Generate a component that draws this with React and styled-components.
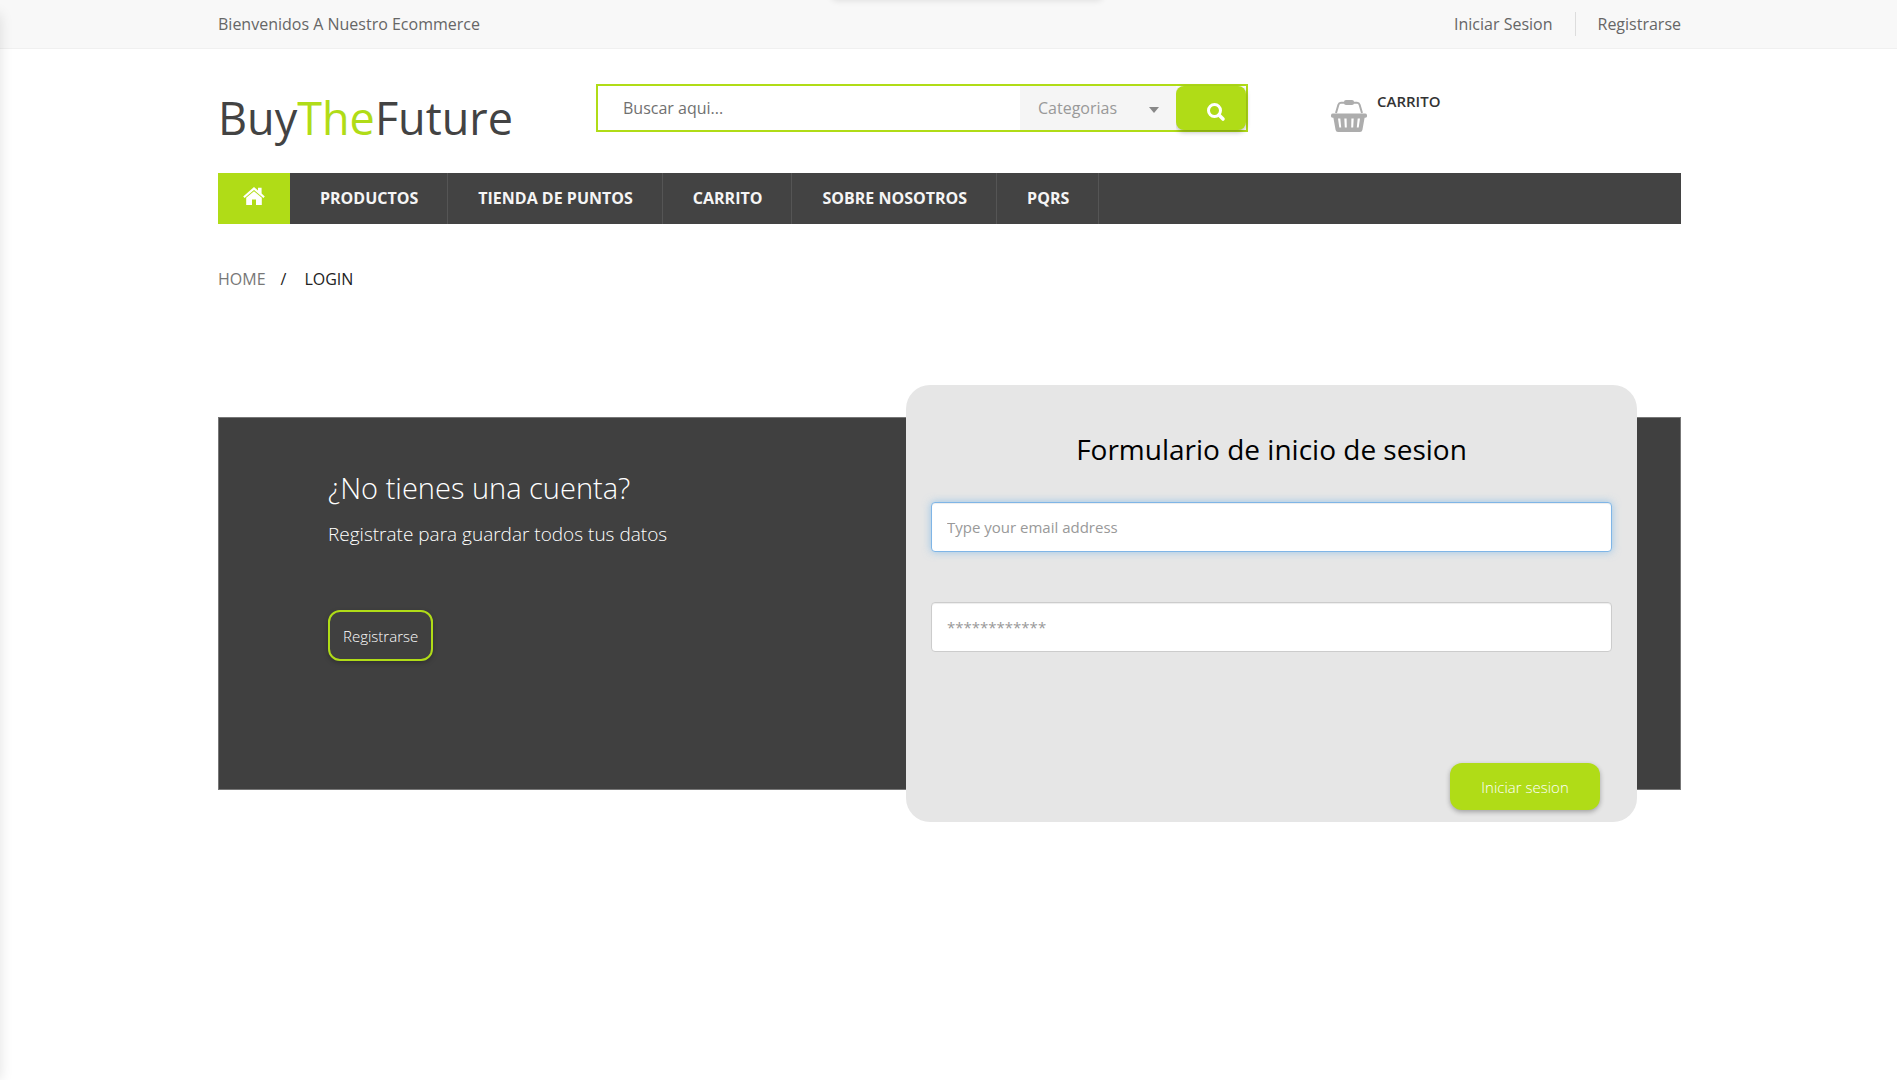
import React from "react";
import styled, { createGlobalStyle } from "styled-components";

const GREEN = "#b0dc17";

const Global = createGlobalStyle`
  *, *::before, *::after { box-sizing: border-box; }
  body {
    margin: 0;
    background: #fff;
    color: #333;
    font-family: "Open Sans", "Noto Sans", sans-serif;
    font-size: 16px;
    line-height: 24px;
  }
  a { color: inherit; text-decoration: none; }
  button, input, select { font-family: inherit; }
`;

const Page = styled.div`
  position: relative;
  min-height: 100vh;
  overflow: hidden;
`;

const EdgeShadow = styled.div`
  position: absolute;
  top: 14px;
  bottom: 0;
  left: -20px;
  width: 20px;
  box-shadow: 0 0 14px rgba(0, 0, 0, 0.12);
  pointer-events: none;
`;

const TopShadow = styled.div`
  position: absolute;
  top: -20px;
  left: 51%;
  width: 272px;
  height: 20px;
  transform: translateX(-50%);
  border-radius: 6px;
  box-shadow: 0 1px 6px rgba(0, 0, 0, 0.1);
  pointer-events: none;
`;

const Container = styled.div`
  width: 100%;
  max-width: 1495px;
  margin: 0 auto;
  padding: 0 15px 0 17px;
`;

const TopBar = styled.div`
  background: #f8f8f8;
  border-bottom: 1px solid #f0f0f0;
  color: #666;
`;

const TopRow = styled(Container)`
  display: flex;
  justify-content: space-between;
  align-items: center;
  height: 48px;
`;

const AccountLinks = styled.nav`
  display: flex;
  a + a {
    margin-left: 22px;
    padding-left: 22px;
    border-left: 1px solid #ddd;
  }
`;

const Header = styled.header`
  display: grid;
  grid-template-columns: 378px minmax(300px, 652px) auto;
  padding-top: 35px;
  height: 124px;
`;

const Logo = styled.a`
  padding-top: 4px;
  font-size: 45px;
  line-height: 60px;
  color: #434343;
  span { color: ${GREEN}; }
`;

const Search = styled.form`
  display: flex;
  height: 48px;
  border: 2px solid ${GREEN};
`;

const SearchInput = styled.input`
  flex: 1;
  min-width: 0;
  padding: 0 25px;
  border: 0;
  outline: 0;
  font-size: 16px;
  color: #666;
  &::placeholder { color: #707070; opacity: 1; }
`;

const CategoryBox = styled.div`
  position: relative;
  width: 156px;
  background: #f5f5f5;
  &::after {
    content: "";
    position: absolute;
    right: 17px;
    top: 21px;
    border: 5px solid transparent;
    border-top: 6px solid #888;
    border-bottom: 0;
    pointer-events: none;
  }
`;

const Category = styled.select`
  appearance: none;
  width: 100%;
  height: 100%;
  padding: 0 18px;
  border: 0;
  background: transparent;
  color: #999;
  font-size: 16px;
`;

const SearchButton = styled.button`
  display: flex;
  align-items: center;
  justify-content: center;
  width: 70px;
  padding: 8px 0 0 10px;
  border: 0;
  border-radius: 8px;
  background: ${GREEN};
  box-shadow: 0 2px 5px rgba(0, 0, 0, 0.3);
  color: #fff;
`;

const Cart = styled.a`
  display: flex;
  align-items: flex-start;
  gap: 10px;
  padding: 5px 0 0 83px;
  color: #333;
  font-size: 15px;
  font-weight: 600;
  svg { margin-top: 11px; color: #adadad; }
`;

const MainNav = styled.nav`
  display: flex;
  align-items: stretch;
  height: 51px;
  background: #434343;
`;

const HomeLink = styled.a`
  display: flex;
  align-items: center;
  justify-content: center;
  width: 72px;
  padding-bottom: 6px;
  background: ${GREEN};
  color: #fff;
`;

const NavLink = styled.a`
  padding: 13px 29px 0 30px;
  border-right: 1px solid #555;
  color: #f5f5f5;
  font-weight: 700;
`;

const Breadcrumb = styled.nav`
  display: flex;
  gap: 15px;
  padding: 43px 0;
  color: #222;
  a { color: #777; }
  span:last-child { margin-left: 3px; }
`;

const Panel = styled.main`
  display: flex;
  justify-content: space-between;
  align-items: flex-start;
  height: 373px;
  margin-top: 83px;
  padding: 0 43px 0 109px;
  background: #404040;
  border: 1px solid #777;
`;

const Intro = styled.section`
  padding-top: 48px;
  color: #fff;
  font-weight: 300;
`;

const IntroTitle = styled.h2`
  margin: 0;
  font-size: 29px;
  line-height: 44px;
  font-weight: 300;
`;

const IntroText = styled.p`
  margin: 8px 0 60px;
  font-size: 19px;
  line-height: 32px;
`;

const RegisterButton = styled.button`
  height: 51px;
  padding: 0 13px;
  border: 2px solid ${GREEN};
  border-radius: 12px;
  background: transparent;
  box-shadow: 0 2px 5px rgba(0, 0, 0, 0.25);
  color: #fff;
  font-size: 15px;
  font-weight: 300;
`;

const Card = styled.form`
  display: flex;
  flex: 0 1 731px;
  flex-direction: column;
  height: 437px;
  margin-top: -33px;
  padding: 44px 25px 12px;
  border-radius: 24px;
  background: #e6e6e6;
`;

const CardTitle = styled.h2`
  margin: 0 0 33px;
  text-align: center;
  color: #000;
  font-size: 28px;
  line-height: 40px;
  font-weight: 400;
`;

const Field = styled.input`
  height: 50px;
  margin-bottom: 50px;
  padding: 0 15px;
  border: 1px solid ${(p) => (p.$active ? "#7fb5e6" : "#ccc")};
  border-radius: 4px;
  outline: 0;
  background: #fff;
  box-shadow: inset 0 1px 1px rgba(0, 0, 0, 0.075)
    ${(p) => (p.$active ? ", 0 0 8px rgba(102, 175, 233, 0.6)" : "")};
  color: #555;
  font-size: 15px;
  &::placeholder { color: #999; opacity: 1; }
`;

const SubmitButton = styled.button`
  align-self: flex-end;
  width: 150px;
  height: 47px;
  margin: auto 12px 0 0;
  border: 0;
  border-radius: 12px;
  background: ${GREEN};
  box-shadow: 0 2px 5px rgba(0, 0, 0, 0.3);
  color: #fff;
  font-size: 15px;
  font-weight: 300;
`;

const HomeIcon = () => (
  <svg width="22" height="18" viewBox="0 0 22 18" fill="currentColor" aria-hidden="true">
    <path d="M11 0 L15 3.4 V0.8 H18.6 V6.6 L21.8 9.4 L20.4 11 L11 2.9 L1.6 11 L0.2 9.4 Z" />
    <path d="M11 4.2 L18.8 10.8 V18 H13 V12.6 H9 V18 H3.2 V10.8 Z" />
  </svg>
);

const SearchIcon = () => (
  <svg width="20" height="20" viewBox="0 0 20 20" fill="none" stroke="currentColor" aria-hidden="true">
    <circle cx="8.5" cy="8.5" r="6" strokeWidth="3" />
    <path d="M13 13 L17 17" strokeWidth="3.6" strokeLinecap="round" />
  </svg>
);

const BasketIcon = () => (
  <svg width="36" height="32" viewBox="0 0 36 32" aria-hidden="true">
    <path
      d="M5 13 L7.4 4.8 Q8 2.8 10 2.8 H26 Q28 2.8 28.6 4.8 L31 13"
      fill="none"
      stroke="currentColor"
      strokeWidth="2"
    />
    <rect x="13" y="0" width="10" height="5" rx="2" fill="currentColor" />
    <path
      fill="currentColor"
      fillRule="evenodd"
      d="M2 13.6 H34 A2 2 0 0 1 34 17.8 H33.6 L31.4 30 Q31 32 29 32 H7 Q5 32 4.6 30 L2.4 17.8 H2 A2 2 0 0 1 2 13.6 Z M7 18.4 L8.3 27.6 H10.2 L9.3 18.4 Z M13.3 18.4 L13.8 27.6 H15.8 L15.6 18.4 Z M20.4 18.4 L20.2 27.6 H22.2 L22.7 18.4 Z M26.7 18.4 L25.8 27.6 H27.7 L29 18.4 Z"
    />
  </svg>
);

const links = ["PRODUCTOS", "TIENDA DE PUNTOS", "CARRITO", "SOBRE NOSOTROS", "PQRS"];

export default function App() {
  return (
    <Page>
      <Global />
      <TopBar>
        <TopRow>
          <span>Bienvenidos A Nuestro Ecommerce</span>
          <AccountLinks>
            <a href="#login">Iniciar Sesion</a>
            <a href="#register">Registrarse</a>
          </AccountLinks>
        </TopRow>
      </TopBar>
      <Container>
        <Header>
          <Logo href="#home">Buy<span>The</span>Future</Logo>
          <Search>
            <SearchInput type="text" aria-label="Buscar" placeholder="Buscar aqui..." />
            <CategoryBox>
              <Category aria-label="Categorias">
                <option>Categorias</option>
              </Category>
            </CategoryBox>
            <SearchButton type="button" aria-label="Buscar"><SearchIcon /></SearchButton>
          </Search>
          <Cart href="#cart"><BasketIcon />CARRITO</Cart>
        </Header>
        <MainNav>
          <HomeLink href="#home" aria-label="Home"><HomeIcon /></HomeLink>
          {links.map((l) => <NavLink key={l} href="#nav">{l}</NavLink>)}
        </MainNav>
        <Breadcrumb>
          <a href="#home">HOME</a>
          <span>/</span>
          <span>LOGIN</span>
        </Breadcrumb>
        <Panel>
          <Intro>
            <IntroTitle>¿No tienes una cuenta?</IntroTitle>
            <IntroText>Registrate para guardar todos tus datos</IntroText>
            <RegisterButton type="button">Registrarse</RegisterButton>
          </Intro>
          <Card>
            <CardTitle>Formulario de inicio de sesion</CardTitle>
            <Field $active type="email" aria-label="Email" placeholder="Type your email address" />
            <Field type="password" aria-label="Password" placeholder="************" />
            <SubmitButton type="button">Iniciar sesion</SubmitButton>
          </Card>
        </Panel>
      </Container>
      <EdgeShadow />
      <TopShadow />
    </Page>
  );
}
